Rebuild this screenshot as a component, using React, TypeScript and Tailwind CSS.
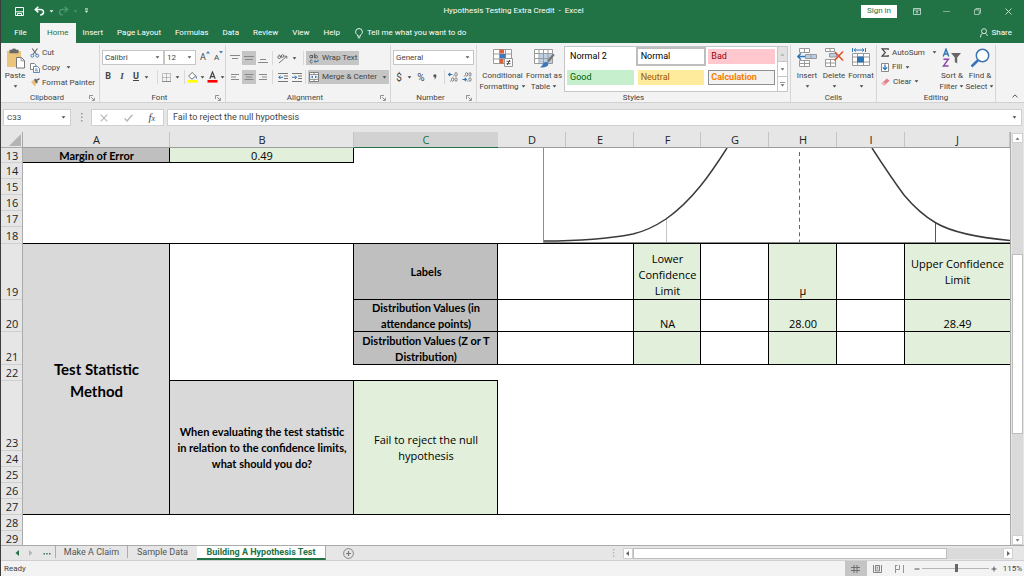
import type React from "react"
import { useState } from "react"
import clsx from "clsx"

const COLUMNS = [
    { name: "A", width: "w-[147px]" },
    { name: "B", width: "w-[184px]" },
    { name: "C", width: "w-[144px]" },
    { name: "D", width: "w-[68px]" },
    { name: "E", width: "w-[68px]" },
    { name: "F", width: "w-[67px]" },
    { name: "G", width: "w-[68px]" },
    { name: "H", width: "w-[68px]" },
    { name: "I", width: "w-[68px]" },
    { name: "J", width: "" },
]

// Cell rules are inset shadows so that they take no room from the text
const BOX = "shadow-[inset_-1px_-1px_0_#000]"
const RULE_RIGHT = "shadow-[inset_-1px_0_0_#000]"
const RULE_BOTTOM = "shadow-[inset_0_-1px_0_#000]"

const GREEN_CELL = "bg-[#e2efda]"
const GRAY_CELL = "bg-[#bfbfbf] font-['Lato',sans-serif] font-bold"
const LIGHT_CELL = "bg-[#d9d9d9] font-['Lato',sans-serif] font-bold"

/* ---------- small shared pieces ---------- */

function Caret({ className }: { className?: string }) {
    return (
        <svg width="5" height="3" viewBox="0 0 5 3" className={clsx("shrink-0", className)} aria-hidden="true">
            <path d="M0.6 0.2h3.8L2.5 2.5z" fill="currentColor" />
        </svg>
    )
}

function Divider() {
    return <span className="h-3.5 w-px shrink-0 bg-[#d8d8d8]" />
}

function IconButton({
    label,
    active,
    className,
    children,
}: {
    label: string
    active?: boolean
    className?: string
    children: React.ReactNode
}) {
    return (
        <button
            type="button"
            aria-label={label}
            className={clsx("flex h-3.5 items-center justify-center", active && "bg-[#c5c5c5]", className)}
        >
            {children}
        </button>
    )
}

function Group({
    label,
    launcher,
    className,
    children,
}: {
    label: string
    launcher?: boolean
    className?: string
    children: React.ReactNode
}) {
    return (
        <section className={clsx("mt-0.5 flex flex-col border-r border-[#d6d6d6]", className)}>
            <div className="h-12">{children}</div>
            <div className="flex h-[9px] items-center px-1">
                <span className="flex-1 text-center text-[8px] leading-[9px] text-[#444]">{label}</span>
                {launcher && (
                    <button type="button" aria-label={`${label} settings`}>
                        <svg width="6" height="6" viewBox="0 0 6 6" fill="none" stroke="#777" strokeWidth="0.8">
                            <path d="M0.5 4V0.5H4M2.2 2.2l3 3M5.4 2.8v2.6H2.8" />
                        </svg>
                    </button>
                )}
            </div>
        </section>
    )
}

function RibbonSelect({
    label,
    options,
    className,
}: {
    label: string
    options: string[]
    className?: string
}) {
    return (
        <div className={clsx("relative flex", className)}>
            <select
                aria-label={label}
                className="h-[15px] w-full appearance-none border border-[#c6c6c6] bg-white pl-0.5 text-[8px] leading-3 text-[#444]"
            >
                {options.map((option) => (
                    <option key={option}>{option}</option>
                ))}
            </select>
            <Caret className="pointer-events-none absolute top-1.5 right-1 text-[#555]" />
        </div>
    )
}

function TallButton({
    icon,
    lines,
    inlineCaret,
    className,
}: {
    icon: React.ReactNode
    lines: string[]
    inlineCaret?: boolean
    className?: string
}) {
    return (
        <button type="button" className={clsx("flex flex-col items-center text-[8px] leading-[11px] text-[#444]", className)}>
            <span className="flex h-6 items-center justify-center">{icon}</span>
            {lines.map((line, i) => (
                <span key={line} className="flex items-center gap-0.5 whitespace-nowrap">
                    {line}
                    {inlineCaret && i === lines.length - 1 && <Caret />}
                </span>
            ))}
            {!inlineCaret && <Caret className="mt-1" />}
        </button>
    )
}

/* ---------- title bar and tabs ---------- */

function TitleBar() {
    return (
        <header className="flex h-[22px] shrink-0 items-center text-white">
            <div className="flex flex-1 items-center pl-3.5">
                <button type="button" aria-label="Save">
                    <svg width="9" height="9" viewBox="0 0 9 9" fill="none" stroke="#fff">
                        <path d="M0.5 0.5h8v8h-8zM1 4.8h7" />
                        <path d="M2.5 8.5V6.5h4v2" />
                    </svg>
                </button>
                <button type="button" aria-label="Undo" className="ml-2.5 flex items-center gap-1">
                    <svg width="11" height="10" viewBox="0 0 11 10" fill="none" stroke="#fff" strokeWidth="1.5">
                        <path d="M4.3 0.7L1.3 3.5l3 2.9M1.6 3.5h4.8c4.2 0 4.2 5.2-0.2 5.4" />
                    </svg>
                    <Caret />
                </button>
                <button type="button" aria-label="Redo" className="ml-1 flex items-center gap-1 text-[#4f9570]">
                    <svg width="11" height="10" viewBox="0 0 11 10" fill="none" stroke="currentColor" strokeWidth="1.3">
                        <path d="M6.7 0.7l3 2.8-3 2.9M9.4 3.5H4.6c-4.2 0-4.2 5.2 0.2 5.4" />
                    </svg>
                    <Caret />
                </button>
                <button type="button" aria-label="Customize toolbar" className="ml-1.5">
                    <svg width="5" height="6" viewBox="0 0 5 6" fill="#fff">
                        <path d="M1 0.5h3v0.9H1zM0.8 2.8h3.4L2.5 4.8z" />
                    </svg>
                </button>
            </div>
            <h1 className="text-[8px] whitespace-pre">Hypothesis Testing Extra Credit  -  Excel</h1>
            <div className="flex flex-1 items-center justify-end pr-3">
                <button type="button" className="mr-4 h-[13px] w-9 bg-white text-[8px] leading-3 text-[#217346]">
                    Sign in
                </button>
                <button type="button" aria-label="Ribbon options" className="mr-[22px]">
                    <svg width="8" height="7" viewBox="0 0 8 7" fill="none" stroke="#d4e5db" strokeWidth="0.8">
                        <path d="M0.5 0.5h7v6h-7zM0.5 2h7M4 5.8V3.2M2.8 4.3L4 3.1l1.2 1.2" />
                    </svg>
                </button>
                <button type="button" aria-label="Minimize" className="mr-6">
                    <svg width="7" height="7" viewBox="0 0 7 7" stroke="#7fb397">
                        <path d="M0 3.5h7" />
                    </svg>
                </button>
                <button type="button" aria-label="Restore" className="mr-6">
                    <svg width="7" height="7" viewBox="0 0 7 7" fill="none" stroke="#b9d5c5" strokeWidth="0.8">
                        <path d="M0.5 1.8h4.7v4.7H0.5zM1.8 1.8V0.5h4.7v4.7H5.2" />
                    </svg>
                </button>
                <button type="button" aria-label="Close">
                    <svg width="7" height="7" viewBox="0 0 7 7" stroke="#cfe2d7" strokeWidth="0.9">
                        <path d="M0.5 0.5l6 6M6.5 0.5l-6 6" />
                    </svg>
                </button>
            </div>
        </header>
    )
}

function RibbonTabs() {
    const [active, setActive] = useState("Home")
    const tabs = ["Home", "Insert", "Page Layout", "Formulas", "Data", "Review", "View", "Help"]

    return (
        <nav className="flex h-[21px] shrink-0 items-stretch pt-px text-[8px] text-white">
            <button type="button" className="w-[39px]">
                File
            </button>
            {tabs.map((tab) => (
                <button
                    key={tab}
                    type="button"
                    onClick={() => setActive(tab)}
                    className={clsx("px-[7px]", tab === active && "bg-[#f3f3f3] text-[#217346]")}
                >
                    {tab}
                </button>
            ))}
            <button type="button" className="ml-2 flex items-center gap-1">
                <svg width="8" height="11" viewBox="0 0 8 11" fill="none" stroke="#fff" strokeWidth="0.9">
                    <path d="M2.6 8.2V7C1.2 6 0.6 5.1 0.6 3.9a3.4 3.4 0 0 1 6.8 0C7.4 5.1 6.8 6 5.4 7v1.2zM2.8 9.8h2.4" />
                </svg>
                Tell me what you want to do
            </button>
            <button type="button" className="mr-3 ml-auto flex items-center gap-1">
                <svg width="8" height="10" viewBox="0 0 8 10" fill="none" stroke="#fff" strokeWidth="0.8">
                    <circle cx="4" cy="3.2" r="2.5" />
                    <path d="M2.5 5.4C1 6 0.6 7.5 0.6 9.4M5.5 5.4c1.1 0.5 1.7 1.4 1.9 2.5" />
                </svg>
                Share
            </button>
        </nav>
    )
}

/* ---------- ribbon groups ---------- */

function ClipboardGroup() {
    return (
        <Group label="Clipboard" launcher className="w-[99px]">
            <div className="flex">
                <TallButton
                    className="w-7 pt-px"
                    lines={["Paste"]}
                    icon={
                        <svg width="19" height="21" viewBox="0 0 19 21">
                            <path d="M1 3h14v16H1z" fill="#ecc57d" />
                            <path d="M3.5 1.8h2.2a2.4 1.8 0 0 1 4.6 0h2.2v3.4h-9z" fill="#6a6a6a" />
                            <path d="M10.5 9.5h5l3 3v7.5h-8z" fill="#fff" stroke="#777" />
                            <path d="M15.2 9.8v3h3" fill="none" stroke="#777" strokeWidth="0.8" />
                        </svg>
                    }
                />
                <div className="flex flex-col items-start pl-px text-[8px] text-[#444]">
                    <button type="button" className="flex h-[15px] items-center gap-0.5">
                        <svg width="10" height="10" viewBox="0 0 10 10" fill="none">
                            <path d="M2.2 0.5l4.4 6M7.4 0.5L3 6.5" stroke="#666" strokeWidth="1.1" />
                            <circle cx="2.3" cy="7.7" r="1.5" stroke="#4a7ebb" />
                            <circle cx="7.3" cy="7.7" r="1.5" stroke="#4a7ebb" />
                        </svg>
                        Cut
                    </button>
                    <button type="button" className="flex h-[15px] items-center gap-0.5">
                        <svg width="10" height="10" viewBox="0 0 10 10" fill="#fff" strokeWidth="0.9">
                            <path d="M0.5 0.5h3.8l1.7 1.7v4.3H0.5z" stroke="#777" />
                            <path d="M3.5 3.5h4l2 2v4h-6z" stroke="#4a7ebb" />
                            <path d="M5 6h2.5M5 7.8h3" stroke="#4a7ebb" />
                        </svg>
                        Copy
                        <Caret className="ml-1" />
                    </button>
                    <button type="button" className="flex h-[15px] items-center gap-0.5 whitespace-nowrap">
                        <svg width="10" height="9" viewBox="0 0 10 9">
                            <path d="M1 3.6l3.6-1.8 1.8 3.6L4.6 8.6z" fill="#ecc07a" />
                            <path d="M4 1.6l2-1 2 3.6-1.8 1.4z" fill="#666" />
                            <path d="M7 2.2L9.4 0.6" stroke="#555" strokeWidth="1.3" />
                        </svg>
                        Format Painter
                    </button>
                </div>
            </div>
        </Group>
    )
}

function FontGroup() {
    return (
        <Group label="Font" launcher className="w-[126px]">
            <div className="flex flex-col gap-[5px] pt-[5px] pl-0.5 text-[#444]">
                <div className="flex items-center">
                    <RibbonSelect label="Font name" options={["Calibri", "Arial"]} className="w-[62px]" />
                    <RibbonSelect label="Font size" options={["12", "11", "14"]} className="w-8" />
                    <IconButton label="Increase font size" className="ml-1 text-[9px]">
                        A
                        <svg width="4" height="3" viewBox="0 0 4 3" className="self-start">
                            <path d="M2 0l2 2.5H0z" fill="#4a7ebb" />
                        </svg>
                    </IconButton>
                    <IconButton label="Decrease font size" className="ml-1 text-[8px]">
                        A
                        <svg width="4" height="3" viewBox="0 0 4 3" className="self-start">
                            <path d="M2 2.5L0 0h4z" fill="#4a7ebb" />
                        </svg>
                    </IconButton>
                </div>
                <div className="flex items-center text-[9px]">
                    <IconButton label="Bold" className="w-3 font-bold">B</IconButton>
                    <IconButton label="Italic" className="w-4 font-['Liberation_Serif',serif] font-bold italic">I</IconButton>
                    <IconButton label="Underline" className="w-3 font-bold underline">U</IconButton>
                    <Caret className="mr-2 ml-0.5" />
                    <Divider />
                    <IconButton label="Borders" className="gap-1 pl-1">
                        <svg width="9" height="9" viewBox="0 0 9 9" fill="none" stroke="#8a8a8a">
                            <path d="M0.5 0.5h8v8h-8zM4.5 0.5v8M0.5 4.5h8" strokeDasharray="1 1" />
                            <path d="M0 8.5h9" />
                        </svg>
                        <Caret />
                    </IconButton>
                    <span className="w-1" />
                    <Divider />
                    <IconButton label="Fill color" className="gap-0.5 pl-0.5">
                        <svg width="11" height="12" viewBox="0 0 11 12">
                            <path d="M1.6 5.2l3.6-3.8 3.4 3.6-3.6 3.2z" fill="#fff" stroke="#666" strokeWidth="0.9" />
                            <path d="M8.6 4c1.2 1.2 1.7 2.6 0.9 4-0.9-1-1.1-2.4-0.9-4z" fill="#4a7ebb" />
                            <path d="M0.5 9h10v2.6h-10z" fill="#ff0" />
                        </svg>
                        <Caret />
                    </IconButton>
                    <IconButton label="Font color" className="gap-0.5 pl-0.5">
                        <svg width="11" height="12" viewBox="0 0 11 12">
                            <path d="M2.8 7.8L5.5 1l2.7 6.8M3.8 5.6h3.4" fill="none" stroke="#444" strokeWidth="1.2" />
                            <path d="M0.5 9h10v2.6h-10z" fill="#f00" />
                        </svg>
                        <Caret />
                    </IconButton>
                </div>
            </div>
        </Group>
    )
}

function LinesIcon({ d }: { d: string }) {
    return (
        <svg width="10" height="10" viewBox="0 0 10 10" stroke="#888" fill="none">
            <path d={d} />
        </svg>
    )
}

function AlignmentGroup() {
    return (
        <Group label="Alignment" launcher className="w-[165px]">
            <div className="flex flex-col gap-[5px] pt-1.5 pl-0.5 text-[8px] text-[#444]">
                <div className="flex items-center">
                    <IconButton label="Top align" className="w-3.5">
                        <LinesIcon d="M0 2.5h10M2 5.5h6" />
                    </IconButton>
                    <IconButton label="Middle align" active className="w-3.5">
                        <LinesIcon d="M0 3.5h10M1 6.5h8" />
                    </IconButton>
                    <IconButton label="Bottom align" className="mr-0.5 w-3.5">
                        <LinesIcon d="M2 6.5h6M0 9.5h10" />
                    </IconButton>
                    <Divider />
                    <IconButton label="Orientation" className="ml-1 gap-1">
                        <svg width="11" height="11" viewBox="0 0 11 11" fill="none" stroke="#666" strokeWidth="0.9">
                            <circle cx="2.2" cy="4.2" r="1.4" />
                            <path d="M1.8 1.5l3 3.2" />
                            <circle cx="5.6" cy="3" r="1.3" />
                            <path d="M2 10L9.6 3.4M7.4 3.2h2.4v2.4" />
                        </svg>
                        <Caret />
                    </IconButton>
                    <span className="w-1.5" />
                    <Divider />
                    <button type="button" className="ml-0.5 flex h-3.5 w-[53px] items-center gap-[3px] bg-[#c5c5c5] pl-[3px] whitespace-nowrap">
                        <svg width="10" height="11" viewBox="0 0 10 11" fill="none" stroke="#555" strokeWidth="0.9">
                            <circle cx="2" cy="3.6" r="1.3" />
                            <path d="M3.6 2v3.2M5.6 0.5v4.7M3.4 7.5a1.4 1.4 0 1 0 0 2" />
                            <circle cx="7.2" cy="3.8" r="1.3" />
                            <path d="M9 6.5v2H5.2M6.6 7.1L5.2 8.5l1.4 1.4" stroke="#2e75b6" />
                        </svg>
                        Wrap Text
                    </button>
                </div>
                <div className="flex items-center">
                    <IconButton label="Align left" className="w-3.5">
                        <LinesIcon d="M1 2.5h8M1 5h5M1 7.5h8" />
                    </IconButton>
                    <IconButton label="Center" active className="w-3.5">
                        <LinesIcon d="M0.5 2.5h9M2 5h6M0.5 7.5h9" />
                    </IconButton>
                    <IconButton label="Align right" className="mr-0.5 w-3.5">
                        <LinesIcon d="M1 2.5h8M4 5h5M1 7.5h8" />
                    </IconButton>
                    <Divider />
                    <IconButton label="Decrease indent" className="ml-1 w-3">
                        <svg width="10" height="9" viewBox="0 0 10 9" fill="none" stroke="#777">
                            <path d="M0 0.5h10M6 3h4M6 5.5h4M0 8.5h10" />
                            <path d="M5 4.3H0.8M2.4 2.6L0.8 4.3 2.4 6" stroke="#2e75b6" />
                        </svg>
                    </IconButton>
                    <IconButton label="Increase indent" className="ml-0.5 w-3">
                        <svg width="10" height="9" viewBox="0 0 10 9" fill="none" stroke="#777">
                            <path d="M0 0.5h10M6 3h4M6 5.5h4M0 8.5h10" />
                            <path d="M0 4.3h4.6M3 2.6l1.6 1.7L3 6" stroke="#2e75b6" />
                        </svg>
                    </IconButton>
                    <span className="w-0.5 shrink-0" />
                    <Divider />
                    <button type="button" className="ml-0.5 flex h-3.5 w-[81px] items-center gap-[3px] bg-[#c5c5c5] pl-px whitespace-nowrap">
                        <svg width="10" height="10" viewBox="0 0 10 10" fill="#fff" stroke="#777" strokeWidth="0.9">
                            <path d="M0.5 0.5h9v9h-9zM5 0.5v2M5 7.5v2M0.5 2.7h9M0.5 7.3h9" />
                            <path d="M1.5 5h2.3M8.5 5H6.2M3 4l1 1-1 1M7 4L6 5l1 1" stroke="#2e75b6" fill="none" />
                        </svg>
                        Merge &amp; Center
                        <Caret className="mr-0.5 ml-auto" />
                    </button>
                </div>
            </div>
        </Group>
    )
}

function NumberGroup() {
    return (
        <Group label="Number" launcher className="w-[86px]">
            <div className="flex flex-col gap-[5px] px-0.5 pt-[5px] text-[10px] text-[#444]">
                <RibbonSelect label="Number format" options={["General", "Number", "Percentage"]} />
                <div className="flex items-center">
                    <IconButton label="Accounting format" className="w-3">$</IconButton>
                    <Caret className="mx-0.5" />
                    <IconButton label="Percent style" className="w-3.5">%</IconButton>
                    <IconButton label="Comma style" className="w-3.5">
                        <svg width="4" height="6" viewBox="0 0 4 6">
                            <path d="M1.8 0.2a1.5 1.5 0 0 1 1.6 1.6C3.4 3.8 2.4 5 0.8 5.6 1.6 4.8 2 4 1.8 3.2a1.5 1.5 0 0 1 0-3z" fill="#555" />
                        </svg>
                    </IconButton>
                    <span className="w-0.5" />
                    <Divider />
                    <IconButton label="Increase decimal" className="w-4">
                        <svg width="10" height="10" viewBox="0 0 10 10" fill="none" stroke="#777" strokeWidth="0.9">
                            <path d="M4.4 2.5H0.6M2.2 1L0.6 2.5 2.2 4" stroke="#2e75b6" strokeWidth="1.2" />
                            <ellipse cx="8" cy="2.4" rx="1.2" ry="1.8" />
                            <ellipse cx="4.6" cy="7.5" rx="1.1" ry="1.8" />
                            <ellipse cx="8" cy="7.5" rx="1.1" ry="1.8" />
                            <path d="M5.2 4h1M1.8 9.2h1" />
                        </svg>
                    </IconButton>
                    <IconButton label="Decrease decimal" className="w-3">
                        <svg width="10" height="10" viewBox="0 0 10 10" fill="none" stroke="#777" strokeWidth="0.9">
                            <ellipse cx="4.6" cy="2.4" rx="1.1" ry="1.8" />
                            <ellipse cx="8" cy="2.4" rx="1.1" ry="1.8" />
                            <ellipse cx="8" cy="7.5" rx="1.2" ry="1.8" />
                            <path d="M1.8 4h1M5.2 9.2h1" />
                            <path d="M0.4 7.5h3.8M2.8 6l1.5 1.5L2.8 9" stroke="#2e75b6" strokeWidth="1.2" />
                        </svg>
                    </IconButton>
                </div>
            </div>
        </Group>
    )
}

const CELL_STYLES = [
    { name: "Normal 2", style: "bg-white text-black" },
    { name: "Normal", style: "bg-white text-black ring-2 ring-[#bdbdbd]" },
    { name: "Bad", style: "bg-[#ffc7ce] text-[#9c0006]" },
    { name: "Good", style: "bg-[#c6efce] text-[#006100]" },
    { name: "Neutral", style: "bg-[#ffeb9c] text-[#9c5700]" },
    { name: "Calculation", style: "bg-[#f2f2f2] font-bold text-[#fa7d00] ring-1 ring-[#8f8f8f] ring-inset" },
]

function StylesGroup() {
    return (
        <Group label="Styles" className="min-w-0 flex-1">
            <div className="flex">
                <TallButton
                    className="w-[47px] pt-px pl-1"
                    lines={["Conditional", "Formatting"]}
                    inlineCaret
                    icon={
                        <svg width="20" height="20" viewBox="0 0 20 20">
                            <path d="M0.5 1.5h18v14h-18zM6.5 1.5v14M12.5 1.5v14M0.5 6h18M0.5 11h18" fill="#fff" stroke="#9a9a9a" />
                            <path d="M7 1.5h4v4H7zM7 11h3.5v4.5H7z" fill="#d9603b" />
                            <path d="M7 6h5.5v4.5H7z" fill="#3f78b8" />
                            <path d="M11.5 10.5h8v8h-8z" fill="#fff" stroke="#999" />
                            <path d="M13.5 13.3h4M13.5 15.7h4M16.8 12l-2.6 5" stroke="#444" strokeWidth="0.9" />
                        </svg>
                    }
                />
                <TallButton
                    className="w-10 pt-px"
                    lines={["Format as", "Table"]}
                    inlineCaret
                    icon={
                        <svg width="21" height="20" viewBox="0 0 21 20">
                            <path d="M0.5 1.5h18v14h-18z" fill="#fff" />
                            <path d="M5.5 5.5h13v10h-13z" fill="#bdd0e6" />
                            <path d="M0.5 1.5h18v14h-18zM5 1.5v14M9.5 1.5v14M14 1.5v14M0.5 5.5h18M0.5 10.5h18" fill="none" stroke="#9a9a9a" />
                            <path d="M19.8 6.2L14 13.5" stroke="#777" strokeWidth="2.4" />
                            <path d="M6 19.2c2.4-0.6 2.6-4.6 5.6-5.2 2.4-0.2 3.6 2 2 3.8-1.7 1.8-5 1.9-7.6 1.4z" fill="#3f78b8" />
                        </svg>
                    }
                />
                <div className="mt-px mr-0.5 flex min-w-0 flex-1 border border-[#c6c6c6] bg-white">
                    <div className="grid flex-1 grid-cols-3 gap-x-1 gap-y-1 px-0.5 pt-0.5 pb-1">
                        {CELL_STYLES.map((item) => (
                            <button
                                key={item.name}
                                type="button"
                                className={clsx("h-[15px] truncate pl-[3px] text-left text-[9px] leading-[15px]", item.style)}
                            >
                                {item.name}
                            </button>
                        ))}
                    </div>
                    <div className="flex w-2.5 flex-col divide-y divide-[#c6c6c6] border-l border-[#c6c6c6] text-[#666]">
                        <button type="button" aria-label="Previous styles" className="flex flex-1 items-center justify-center bg-[#e1e1e1] text-[#aaa]">
                            <Caret className="rotate-180" />
                        </button>
                        <button type="button" aria-label="Next styles" className="flex flex-1 items-center justify-center">
                            <Caret />
                        </button>
                        <button type="button" aria-label="More styles" className="flex flex-1 flex-col items-center justify-center gap-px">
                            <span className="h-px w-[5px] bg-[#999]" />
                            <Caret />
                        </button>
                    </div>
                </div>
            </div>
        </Group>
    )
}

function CellsGroup() {
    return (
        <Group label="Cells" className="w-[86px]">
            <div className="flex pt-px pl-0.5">
                <TallButton
                    className="w-7"
                    lines={["Insert"]}
                    icon={
                        <svg width="20" height="20" viewBox="0 0 20 20" fill="#fff" stroke="#999">
                            <path d="M2.5 0.5h10v4h-10zM7.5 0.5v4M2.5 12.5h10v6h-10zM7.5 12.5v6M2.5 15.5h10" />
                            <path d="M8.5 6.5h11v4h-11zM14 6.5v4" fill="#b9cde4" />
                            <path d="M8 8.5H1M3.8 5.5l-3 3 3 3" fill="none" stroke="#2e75b6" strokeWidth="1.5" />
                        </svg>
                    }
                />
                <TallButton
                    className="w-[26px]"
                    lines={["Delete"]}
                    icon={
                        <svg width="20" height="20" viewBox="0 0 20 20" fill="#fff" stroke="#999">
                            <path d="M1.5 0.5h9v3h-9zM6 0.5v3M1.5 11.5h10v7h-10zM6.5 11.5v7M1.5 15h10" />
                            <path d="M5.5 5.5h7v3.5h-7z" fill="#b9cde4" />
                            <path d="M11 4l8 8.5M19 3.5L10.5 12.5" fill="none" stroke="#d9532c" strokeWidth="1.6" />
                        </svg>
                    }
                />
                <TallButton
                    className="w-7"
                    lines={["Format"]}
                    icon={
                        <svg width="20" height="20" viewBox="0 0 20 20" fill="#fff" stroke="#999">
                            <path d="M1.5 5.5h17v12h-17zM6.5 5.5v12M12.5 5.5v12M1.5 9h17M1.5 14h17" />
                            <path d="M6.5 9h6v5h-6z" fill="#2e75b6" stroke="#2e75b6" />
                            <path d="M1.5 0v4M14.5 0v4M3 2h10M4.8 0.4L3 2l1.8 1.6M11.2 0.4L13 2l-1.8 1.6" fill="none" stroke="#2e75b6" />
                        </svg>
                    }
                />
            </div>
        </Group>
    )
}

function EditingGroup() {
    return (
        <Group label="Editing" className="w-[119px]">
            <div className="flex pl-1">
                <div className="flex w-[58px] flex-col items-start text-[8px] text-[#444]">
                    <button type="button" className="flex h-[15px] items-center gap-[3px]">
                        <svg width="8" height="9" viewBox="0 0 8 9" fill="none" stroke="#444" strokeWidth="1.2">
                            <path d="M7.2 2V0.8H1l3.3 3.7L1 8.2h6.2V7" />
                        </svg>
                        AutoSum
                        <Caret className="ml-1" />
                    </button>
                    <button type="button" className="flex h-3.5 items-center gap-[3px]">
                        <svg width="8" height="9" viewBox="0 0 8 9" fill="#fff">
                            <path d="M0.5 0.5h7v8h-7z" stroke="#888" />
                            <path d="M4 1.5v5M1.8 4.4L4 6.6l2.2-2.2" fill="none" stroke="#2e75b6" strokeWidth="1.3" />
                        </svg>
                        Fill
                        <Caret />
                    </button>
                    <button type="button" className="flex h-[15px] items-center gap-[3px]">
                        <svg width="9" height="8" viewBox="0 0 9 8">
                            <path d="M0.4 5.4L5.8 0.5l2.8 2.2-5.3 4.9z" fill="#e4808f" />
                            <path d="M0.4 5.4l1.8-1.7 2.8 2.4-1.7 1.5z" fill="#f0b3bc" />
                        </svg>
                        Clear
                        <Caret />
                    </button>
                </div>
                <TallButton
                    className="w-[26px] pt-px"
                    lines={["Sort &", "Filter"]}
                    inlineCaret
                    icon={
                        <svg width="20" height="20" viewBox="0 0 20 20" fill="none">
                            <path d="M1.2 8.4L4 1.2l2.8 7.2M2.2 6h3.6" stroke="#2e75b6" strokeWidth="1.4" />
                            <path d="M1.4 11.2h5L1.4 18h5.2" stroke="#8e44ad" strokeWidth="1.4" />
                            <path d="M9 5h10l-3.8 4.6v6L12.8 14V9.6z" fill="#666" />
                        </svg>
                    }
                />
                <TallButton
                    className="w-[30px] pt-px"
                    lines={["Find &", "Select"]}
                    inlineCaret
                    icon={
                        <svg width="20" height="20" viewBox="0 0 20 20" fill="none" stroke="#3a74b4">
                            <circle cx="12.5" cy="7.5" r="6.2" strokeWidth="1.5" fill="#fff" />
                            <path d="M8 12.3L1.5 18.5" strokeWidth="2.6" />
                        </svg>
                    }
                />
            </div>
        </Group>
    )
}

function Ribbon() {
    return (
        <div className="flex h-[60px] shrink-0 border-b border-[#d2d2d2] bg-[#f3f3f3]">
            <ClipboardGroup />
            <FontGroup />
            <AlignmentGroup />
            <NumberGroup />
            <StylesGroup />
            <CellsGroup />
            <EditingGroup />
            <button type="button" aria-label="Collapse the ribbon" className="flex w-7 items-end justify-end pr-1.5 pb-1">
                <svg width="6" height="4" viewBox="0 0 6 4" fill="none" stroke="#555">
                    <path d="M0.5 3.3L3 0.9l2.5 2.4" />
                </svg>
            </button>
        </div>
    )
}

function FormulaBar() {
    return (
        <div className="flex h-[29px] shrink-0 items-center gap-[3px] bg-[#e6e6e6] px-0.5 text-[9px] text-[#444]">
            <div className="flex h-[17px] w-[68px] items-center border border-[#d0d0d0] bg-white pr-1">
                <input aria-label="Name box" defaultValue="C33" className="w-full min-w-0 pl-[3px] text-[8px] outline-none" />
                <Caret />
            </div>
            <svg width="14" height="9" viewBox="0 0 14 9" fill="#999">
                <path d="M7 0h1.5v1.5H7zM7 3.5h1.5V5H7zM7 7h1.5v1.5H7z" />
            </svg>
            <div className="flex h-[17px] w-[73px] items-center justify-around border border-[#d0d0d0] bg-white">
                <button type="button" aria-label="Cancel">
                    <svg width="8" height="8" viewBox="0 0 8 8" stroke="#b5b5b5" strokeWidth="1.1">
                        <path d="M0.7 0.7l6.6 6.6M7.3 0.7L0.7 7.3" />
                    </svg>
                </button>
                <button type="button" aria-label="Enter">
                    <svg width="9" height="8" viewBox="0 0 9 8" fill="none" stroke="#b5b5b5" strokeWidth="1.4">
                        <path d="M0.6 4.4L3 7l5.4-6.2" />
                    </svg>
                </button>
                <button type="button" aria-label="Insert function" className="font-['Liberation_Serif',serif] text-[11px] leading-3 italic">
                    f<span className="text-[8px]">x</span>
                </button>
            </div>
            <div className="flex h-[17px] flex-1 items-center border border-[#d0d0d0] bg-white pr-1">
                <input
                    aria-label="Formula"
                    defaultValue="Fail to reject the null hypothesis"
                    className="flex-1 pl-[5px] outline-none"
                />
                <Caret />
            </div>
        </div>
    )
}

/* ---------- worksheet ---------- */

function BellCurve() {
    return (
        <svg
            viewBox="0 0 467 95"
            preserveAspectRatio="none"
            className="mb-px block h-[95px] w-full"
            fill="none"
            role="img"
            aria-label="Normal distribution"
        >
            <path d="M0.5 0v95" stroke="#8c8c8c" />
            <path d="M123.5 71v23" stroke="#c4c4c4" />
            <path d="M392.5 75v19" stroke="#555" />
            <path d="M256.5 4v91" stroke="#666" strokeDasharray="4 3.3" />
            <path d="M0 94.5h467" stroke="#8a8a8a" />
            <path d="M1 93C35 93 62 91.5 90 86C103 83 114 77 123 71C150 52 168 25 184 0" stroke="#3a3a3a" strokeWidth="1.5" />
            <path d="M329 0C340 17 350 32 361 47C371 59 381 68 393 75C412 86 440 90 467 92.5" stroke="#3a3a3a" strokeWidth="1.5" />
        </svg>
    )
}

function Row({ n, height, children }: { n: number; height: string; children?: React.ReactNode }) {
    return (
        <tr className={height}>
            <th
                scope="row"
                className="bg-[#e6e6e6] p-0 align-bottom font-normal text-[#222] shadow-[inset_-1px_0_0_#ababab,inset_0_-1px_0_#cfcfcf]"
            >
                {n}
            </th>
            {children}
        </tr>
    )
}

function Cell({ className, ...props }: React.TdHTMLAttributes<HTMLTableCellElement>) {
    return <td className={clsx("p-0", className)} {...props} />
}

function Worksheet() {
    return (
        <div className="min-w-0 flex-1 overflow-hidden bg-white">
            <table className="w-full table-fixed border-separate border-spacing-0 text-center font-['Open_Sans','Noto_Sans',sans-serif] text-[11px] leading-4 text-black">
                <colgroup>
                    <col className="w-[22px]" />
                    {COLUMNS.map((col) => (
                        <col key={col.name} className={col.width} />
                    ))}
                </colgroup>
                <thead>
                    <tr className="h-4">
                        <th className="bg-[#e6e6e6] p-0 shadow-[inset_-1px_-1px_0_#ababab]">
                            <svg width="12" height="12" viewBox="0 0 12 12" className="ml-2 block" aria-label="Select all">
                                <path d="M12 0v12H0z" fill="#b4b4b4" />
                            </svg>
                        </th>
                        {COLUMNS.map(({ name }) => (
                            <th
                                key={name}
                                scope="col"
                                className={clsx(
                                    "p-0 font-normal",
                                    name === "C"
                                        ? "bg-[#d2d2d2] text-[#217346] shadow-[inset_0_-1px_0_#217346]"
                                        : "bg-[#e6e6e6] text-[#222] shadow-[inset_0_-1px_0_#9b9b9b,inset_-1px_0_0_#c4c4c4]",
                                )}
                            >
                                {name}
                            </th>
                        ))}
                    </tr>
                </thead>
                <tbody>
                    <Row n={13} height="h-[15px] leading-[15px]">
                        <Cell className={clsx(GRAY_CELL, BOX)}>Margin of Error</Cell>
                        <Cell className={clsx(GREEN_CELL, BOX)}>0.49</Cell>
                        <Cell />
                        <Cell colSpan={7} rowSpan={6} className={clsx("pl-[45px] align-bottom", RULE_BOTTOM)}>
                            <BellCurve />
                        </Cell>
                    </Row>
                    <Row n={14} height="h-4"><Cell colSpan={3} /></Row>
                    <Row n={15} height="h-4"><Cell colSpan={3} /></Row>
                    <Row n={16} height="h-4"><Cell colSpan={3} /></Row>
                    <Row n={17} height="h-4"><Cell colSpan={3} /></Row>
                    <Row n={18} height="h-[17px]">
                        <Cell colSpan={3} className={RULE_BOTTOM} />
                    </Row>
                    <Row n={19} height="h-14">
                        <Cell rowSpan={9} className={clsx("px-5 text-[15px] leading-[22px]", LIGHT_CELL, BOX)}>
                            Test Statistic Method
                        </Cell>
                        <Cell rowSpan={3} className={RULE_RIGHT} />
                        <Cell className={clsx(GRAY_CELL, BOX)}>Labels</Cell>
                        <Cell colSpan={2} className={BOX} />
                        <Cell className={clsx("pb-px align-bottom", GREEN_CELL, BOX)}>Lower Confidence Limit</Cell>
                        <Cell className={BOX} />
                        <Cell className={clsx("pb-px align-bottom", GREEN_CELL, BOX)}>μ</Cell>
                        <Cell className={BOX} />
                        <Cell className={clsx(GREEN_CELL, RULE_BOTTOM)}>Upper Confidence Limit</Cell>
                    </Row>
                    <Row n={20} height="h-8">
                        <Cell className={clsx(GRAY_CELL, BOX)}>Distribution Values (in attendance points)</Cell>
                        <Cell colSpan={2} className={BOX} />
                        <Cell className={clsx("align-bottom", GREEN_CELL, BOX)}>NA</Cell>
                        <Cell className={BOX} />
                        <Cell className={clsx("align-bottom", GREEN_CELL, BOX)}>28.00</Cell>
                        <Cell className={BOX} />
                        <Cell className={clsx("align-bottom", GREEN_CELL, RULE_BOTTOM)}>28.49</Cell>
                    </Row>
                    <Row n={21} height="h-[33px]">
                        <Cell className={clsx(GRAY_CELL, BOX)}>Distribution Values (Z or T Distribution)</Cell>
                        <Cell colSpan={2} className={BOX} />
                        <Cell className={clsx(GREEN_CELL, BOX)} />
                        <Cell className={BOX} />
                        <Cell className={clsx(GREEN_CELL, BOX)} />
                        <Cell className={BOX} />
                        <Cell className={clsx(GREEN_CELL, RULE_BOTTOM)} />
                    </Row>
                    <Row n={22} height="h-4">
                        <Cell colSpan={2} className={RULE_BOTTOM} />
                        <Cell colSpan={7} />
                    </Row>
                    <Row n={23} height="h-[70px]">
                        <Cell rowSpan={5} className={clsx(LIGHT_CELL, BOX)}>
                            <p className="px-[5px]">
                                When evaluating the test statistic in relation to the confidence limits, what should you do?
                            </p>
                        </Cell>
                        <Cell rowSpan={5} className={clsx("px-4", GREEN_CELL, BOX)}>
                            Fail to reject the null hypothesis
                        </Cell>
                        <Cell colSpan={7} rowSpan={5} className={RULE_BOTTOM} />
                    </Row>
                    <Row n={24} height="h-4" />
                    <Row n={25} height="h-4" />
                    <Row n={26} height="h-4" />
                    <Row n={27} height="h-4" />
                    <Row n={28} height="h-4"><Cell colSpan={10} /></Row>
                    <Row n={29} height="h-4"><Cell colSpan={10} /></Row>
                </tbody>
            </table>
        </div>
    )
}

function VerticalScrollbar() {
    return (
        <div className="flex w-3.5 shrink-0 flex-col border-l border-[#ababab] bg-[#e6e6e6] px-px pt-px text-[#666]">
            <button type="button" aria-label="Scroll up" className="flex h-2.5 items-center justify-center border border-[#d0d0d0] bg-white">
                <Caret className="rotate-180" />
            </button>
            <div className="flex flex-1 flex-col bg-[#dadada]">
                <div className="flex-[112]" />
                <div className="flex-[178] border border-[#bdbdbd] bg-white" />
                <div className="flex-[102]" />
            </div>
            <button type="button" aria-label="Scroll down" className="flex h-2.5 items-center justify-center border border-[#d0d0d0] bg-white">
                <Caret />
            </button>
        </div>
    )
}

function SheetTabs() {
    return (
        <div className="flex h-[15px] shrink-0 border-t border-[#ababab] bg-[#e6e6e6] text-[9px] leading-3 text-[#555]">
            <div className="flex w-[54px] items-center justify-between pr-1 pl-3.5">
                <button type="button" aria-label="Previous sheet">
                    <svg width="4" height="6" viewBox="0 0 4 6"><path d="M4 0v6L0.5 3z" fill="#217346" /></svg>
                </button>
                <button type="button" aria-label="Next sheet">
                    <svg width="4" height="6" viewBox="0 0 4 6"><path d="M0 0v6l3.5-3z" fill="#b5b5b5" /></svg>
                </button>
                <button type="button" aria-label="More sheets">
                    <svg width="8" height="3" viewBox="0 0 8 3" fill="#217346">
                        <path d="M0.5 1h1.4v1.4H0.5zM3.3 1h1.4v1.4H3.3zM6.1 1h1.4v1.4H6.1z" />
                    </svg>
                </button>
            </div>
            <button type="button" className="h-3 w-[72px] border-l border-[#ababab] whitespace-nowrap">Make A Claim</button>
            <button type="button" className="h-3 w-[70px] border-l border-[#ababab] whitespace-nowrap">Sample Data</button>
            <button type="button" className="h-3.5 w-[129px] border-r border-b-2 border-r-[#ababab] border-b-[#217346] bg-white font-bold whitespace-nowrap text-[#217346]">
                Building A Hypothesis Test
            </button>
            <button type="button" aria-label="New sheet" className="ml-[17px] flex items-center">
                <svg width="11" height="11" viewBox="0 0 11 11" fill="none" stroke="#777" strokeWidth="0.9">
                    <circle cx="5.5" cy="5.5" r="4.9" />
                    <path d="M5.5 3v5M3 5.5h5" strokeWidth="1.2" />
                </svg>
            </button>
            <div className="ml-auto flex w-[41%] items-center pr-[11px]">
                <svg width="2" height="8" viewBox="0 0 2 8" fill="#a5a5a5" className="mr-2 ml-2 shrink-0">
                    <path d="M0 0h1.3v1.3H0zM0 3.2h1.3v1.3H0zM0 6.4h1.3v1.3H0z" />
                </svg>
                <button type="button" aria-label="Scroll left" className="flex h-[11px] w-2.5 items-center justify-center border border-[#d0d0d0] bg-white">
                    <svg width="3" height="5" viewBox="0 0 3 5"><path d="M3 0v5L0 2.5z" fill="#666" /></svg>
                </button>
                <div className="flex h-[11px] flex-1 bg-[#dadada]">
                    <div className="w-[85%] border border-[#bdbdbd] bg-white" />
                </div>
                <button type="button" aria-label="Scroll right" className="flex h-[11px] w-2.5 items-center justify-center border border-[#d0d0d0] bg-white">
                    <svg width="3" height="5" viewBox="0 0 3 5"><path d="M0 0v5l3-2.5z" fill="#666" /></svg>
                </button>
            </div>
        </div>
    )
}

function StatusBar() {
    const [zoom, setZoom] = useState(115)

    return (
        <footer className="flex h-4 shrink-0 items-stretch border-t border-[#d0d0d0] bg-[#f3f3f3] text-[8px] text-[#444]">
            <span className="flex flex-1 items-center pl-[3px]">Ready</span>
            <button type="button" aria-label="Normal view" className="flex w-[22px] items-center justify-center bg-[#c5c5c5]">
                <svg width="9" height="8" viewBox="0 0 9 8" stroke="#666" strokeWidth="0.9">
                    <path d="M3 0v8M6 0v8M0 2.5h9M0 5.5h9" />
                </svg>
            </button>
            <button type="button" aria-label="Page layout view" className="flex w-[22px] items-center justify-center">
                <svg width="9" height="8" viewBox="0 0 9 8" fill="none" stroke="#777" strokeWidth="0.9">
                    <path d="M0.5 0v7.5h8V0M2.5 0.5v5.5h4V0.5zM3.5 2.2h2M3.5 4h2" />
                </svg>
            </button>
            <button type="button" aria-label="Page break preview" className="flex w-[22px] items-center justify-center">
                <svg width="9" height="8" viewBox="0 0 9 8" fill="none" stroke="#888" strokeWidth="0.9">
                    <path d="M0.5 8V0M8.5 0V8M4.5 0v4.5M0.5 4.5h4M0.5 0.5h2" />
                </svg>
            </button>
            <div className="flex items-center pr-0.5 pl-[3px]">
                <button type="button" aria-label="Zoom out" onClick={() => setZoom(zoom - 5)}>
                    <svg width="6" height="6" viewBox="0 0 6 6" stroke="#555"><path d="M0.5 3h5" /></svg>
                </button>
                <input
                    type="range"
                    aria-label="Zoom"
                    min={10}
                    max={210}
                    value={zoom}
                    onChange={(e) => setZoom(Number(e.target.value))}
                    className="mx-0.5 h-2 w-[67px] appearance-none bg-transparent [&::-webkit-slider-runnable-track]:h-px [&::-webkit-slider-runnable-track]:bg-[#b5b5b5] [&::-webkit-slider-thumb]:-mt-1 [&::-webkit-slider-thumb]:h-2 [&::-webkit-slider-thumb]:w-[3px] [&::-webkit-slider-thumb]:appearance-none [&::-webkit-slider-thumb]:bg-[#666]"
                />
                <button type="button" aria-label="Zoom in" onClick={() => setZoom(zoom + 5)}>
                    <svg width="6" height="6" viewBox="0 0 6 6" stroke="#555"><path d="M0.5 3h5M3 0.5v5" /></svg>
                </button>
                <span className="ml-1.5">{zoom}%</span>
            </div>
        </footer>
    )
}

export default function App() {
    return (
        <div className="flex h-screen flex-col overflow-hidden border-l border-[#3d3d3d] bg-[#217346] font-['Roboto','Noto_Sans',sans-serif]">
            <TitleBar />
            <RibbonTabs />
            <Ribbon />
            <FormulaBar />
            <main className="flex min-h-0 flex-1">
                <Worksheet />
                <VerticalScrollbar />
            </main>
            <SheetTabs />
            <StatusBar />
        </div>
    )
}
